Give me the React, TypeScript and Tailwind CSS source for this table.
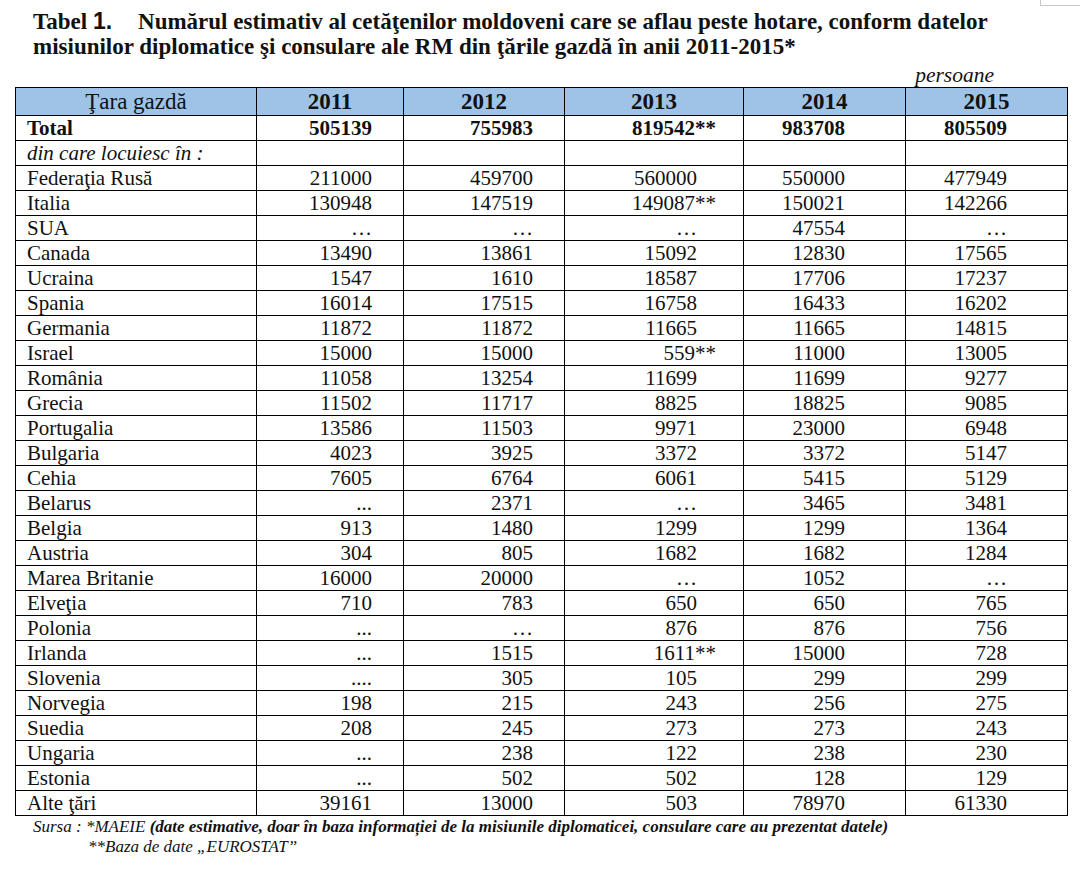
import React from "react";

type Row = { name: string; vals: string[]; bold?: boolean; italic?: boolean };

const rows: Row[] = [
  { name: "Total", vals: ["505139", "755983", "819542**", "983708", "805509"], bold: true },
  { name: "din care locuiesc în :", vals: ["", "", "", "", ""], italic: true },
  { name: "Federaţia Rusă", vals: ["211000", "459700", "560000", "550000", "477949"] },
  { name: "Italia", vals: ["130948", "147519", "149087**", "150021", "142266"] },
  { name: "SUA", vals: ["…", "…", "…", "47554", "…"] },
  { name: "Canada", vals: ["13490", "13861", "15092", "12830", "17565"] },
  { name: "Ucraina", vals: ["1547", "1610", "18587", "17706", "17237"] },
  { name: "Spania", vals: ["16014", "17515", "16758", "16433", "16202"] },
  { name: "Germania", vals: ["11872", "11872", "11665", "11665", "14815"] },
  { name: "Israel", vals: ["15000", "15000", "559**", "11000", "13005"] },
  { name: "România", vals: ["11058", "13254", "11699", "11699", "9277"] },
  { name: "Grecia", vals: ["11502", "11717", "8825", "18825", "9085"] },
  { name: "Portugalia", vals: ["13586", "11503", "9971", "23000", "6948"] },
  { name: "Bulgaria", vals: ["4023", "3925", "3372", "3372", "5147"] },
  { name: "Cehia", vals: ["7605", "6764", "6061", "5415", "5129"] },
  { name: "Belarus", vals: ["...", "2371", "…", "3465", "3481"] },
  { name: "Belgia", vals: ["913", "1480", "1299", "1299", "1364"] },
  { name: "Austria", vals: ["304", "805", "1682", "1682", "1284"] },
  { name: "Marea Britanie", vals: ["16000", "20000", "…", "1052", "…"] },
  { name: "Elveţia", vals: ["710", "783", "650", "650", "765"] },
  { name: "Polonia", vals: ["...", "…", "876", "876", "756"] },
  { name: "Irlanda", vals: ["...", "1515", "1611**", "15000", "728"] },
  { name: "Slovenia", vals: ["....", "305", "105", "299", "299"] },
  { name: "Norvegia", vals: ["198", "215", "243", "256", "275"] },
  { name: "Suedia", vals: ["208", "245", "273", "273", "243"] },
  { name: "Ungaria", vals: ["...", "238", "122", "238", "230"] },
  { name: "Estonia", vals: ["...", "502", "502", "128", "129"] },
  { name: "Alte ţări", vals: ["39161", "13000", "503", "78970", "61330"] },
];

const years = ["2011", "2012", "2013", "2014", "2015"];
const padR = ["pr-[31px]", "pr-[31px]", "pr-[46px]", "pr-[60px]", "pr-[60px]"];

function Num({ v }: { v: string }) {
  // asterisks hang past the number's right edge, like a decimal tab
  if (v.endsWith("**")) {
    return (
      <>
        {v.slice(0, -2)}
        <span className="-mr-[19px]">**</span>
      </>
    );
  }
  return <>{v}</>;
}

export default function App() {
  return (
    <div
      className="relative h-[878px] w-[1080px] overflow-hidden bg-white text-[#111]"
      style={{ fontFamily: '"Liberation Serif", "Times New Roman", serif' }}
    >
      <div className="absolute right-0 top-0 h-[6px] w-[40px] border-b border-l border-[#c8c8c8] bg-white" />

      <div className="pl-[33px] pt-[9px] text-[23px] font-bold leading-[25px]">
        <div>
          Tabel{" "}
          <span
            className="mr-[26px] text-[23px]"
            style={{ fontFamily: '"Liberation Sans", Arial, sans-serif' }}
          >
            1.
          </span>
          Numărul estimativ al cetăţenilor moldoveni care se aflau peste hotare, conform datelor
        </div>
        <div>misiunilor diplomatice şi consulare ale RM din ţările gazdă în anii 2011-2015*</div>
      </div>

      <div className="pr-[86px] pt-[4px] text-right text-[21.5px] italic leading-[24px]">persoane</div>

      <table className="ml-[15px] w-[1052px] table-fixed border-collapse text-[21px] leading-[24px]">
        <colgroup>
          <col className="w-[241px]" />
          <col className="w-[147px]" />
          <col className="w-[161px]" />
          <col className="w-[179px]" />
          <col className="w-[162px]" />
          <col className="w-[162px]" />
        </colgroup>
        <thead>
          <tr className="bg-[#9fc3e7]">
            <th className="h-[28px] border border-black p-0 text-center text-[23px] font-normal">
              Ţara gazdă
            </th>
            {years.map((y) => (
              <th key={y} className="h-[28px] border border-black p-0 text-center text-[23px] font-bold">
                {y}
              </th>
            ))}
          </tr>
        </thead>
        <tbody>
          {rows.map((r) => (
            <tr key={r.name} className={r.bold ? "font-bold" : ""}>
              <td
                className={`h-[25px] whitespace-nowrap border border-black p-0 pl-[11px] ${
                  r.italic ? "italic" : ""
                }`}
              >
                {r.name}
              </td>
              {r.vals.map((v, i) => (
                <td
                  key={i}
                  className={`h-[25px] whitespace-nowrap border border-black p-0 text-right ${padR[i]}`}
                >
                  <Num v={v} />
                </td>
              ))}
            </tr>
          ))}
        </tbody>
      </table>

      <div className="pl-[33px] pt-[1px] text-[17px] italic leading-[20px]">
        <div>
          Sursa : *MAEIE{" "}
          <span className="font-bold">
            (date estimative, doar în baza informației de la misiunile diplomaticei, consulare care au prezentat
            datele)
          </span>
        </div>
        <div className="pl-[55px]">**Baza de date „EUROSTAT”</div>
      </div>
    </div>
  );
}
